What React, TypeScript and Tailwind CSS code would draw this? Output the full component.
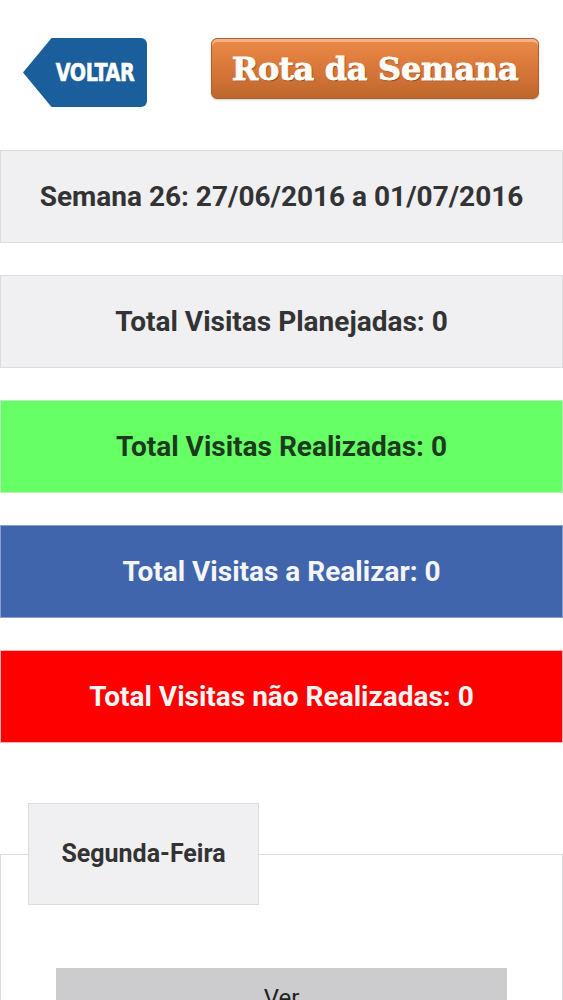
const ROBOTO = "font-['Roboto','Liberation_Sans',sans-serif]";

const TOTALS = [
  {
    label: "Total Visitas Planejadas: 0",
    className: "bg-[#f0eff1] border-[#dcdbdd] text-[#333335]",
  },
  {
    label: "Total Visitas Realizadas: 0",
    className: "bg-[#66ff66] border-[#b8ecb8] text-[#1c3a1c]",
  },
  {
    label: "Total Visitas a Realizar: 0",
    className: "bg-[#4065ad] border-[#8aa0cc] text-[#f5f5f7]",
  },
  {
    label: "Total Visitas não Realizadas: 0",
    className: "bg-[#ff0000] border-[#f3b4b4] text-[#f7f5f5]",
  },
];

function VoltarButton() {
  return (
    <button
      type="button"
      className="flex h-[69px] w-[124px] items-center justify-end rounded-r-[6px] bg-[#1b5e9c] pr-[13px] [clip-path:polygon(23%_0,100%_0,100%_100%,23%_100%,0_50%)]"
    >
      <span className="origin-right scale-x-[0.8] font-['DejaVu_Sans',sans-serif] text-[24px] font-bold leading-none tracking-[-0.5px] text-white [-webkit-text-stroke:0.6px_white]">
        VOLTAR
      </span>
    </button>
  );
}

function RotaHeader() {
  return (
    <div className="flex h-[61px] w-[328px] items-center justify-center rounded-[6px] border border-[#b0602a] bg-gradient-to-b from-[#ec8a48] via-[#d9773a] to-[#bd672d] shadow-[inset_0_3px_0_rgba(255,255,255,0.35),0_1px_2px_rgba(0,0,0,0.2)]">
      <span className="font-['DejaVu_Serif',serif] text-[32px] font-bold leading-none tracking-[-0.3px] text-[#fffdf8] [-webkit-text-stroke:0.8px_#fffdf8] [text-shadow:1px_1px_1px_rgba(90,40,10,0.7)]">
        Rota da Semana
      </span>
    </div>
  );
}

export default function App() {
  return (
    <div className={`min-h-[1000px] bg-white ${ROBOTO}`}>
      {/* Header */}
      <div className="flex items-start pl-[23px] pt-[38px]">
        <VoltarButton />
        <div className="ml-[64px]">
          <RotaHeader />
        </div>
      </div>

      {/* Week */}
      <div className="mt-[43px] flex h-[93px] items-center justify-center border border-[#dcdbdd] bg-[#f0eff1]">
        <p className="text-[28px] font-bold text-[#333335]">
          Semana 26: 27/06/2016 a 01/07/2016
        </p>
      </div>

      {/* Totals */}
      <div className="mt-[32px] flex flex-col gap-[32px]">
        {TOTALS.map((t) => (
          <div
            key={t.label}
            className={`flex h-[93px] items-center justify-center border ${t.className}`}
          >
            <p className="text-[28px] font-bold">{t.label}</p>
          </div>
        ))}
      </div>

      {/* Day */}
      <fieldset className="mx-0 mt-[60px] border border-[#dcdbdd] p-0 pb-[40px]">
        <legend className="ml-[27px] flex h-[102px] w-[231px] items-center justify-center border border-[#dcdbdd] bg-[#f0eff1]">
          <span className="text-[25px] font-bold text-[#333335]">Segunda-Feira</span>
        </legend>
        <div className="mt-[63px] px-[55px]">
          <button
            type="button"
            className="flex h-[60px] w-[451px] items-center justify-center bg-[#cccbcd] text-[24px] text-[#222]"
          >
            Ver
          </button>
        </div>
      </fieldset>
    </div>
  );
}
